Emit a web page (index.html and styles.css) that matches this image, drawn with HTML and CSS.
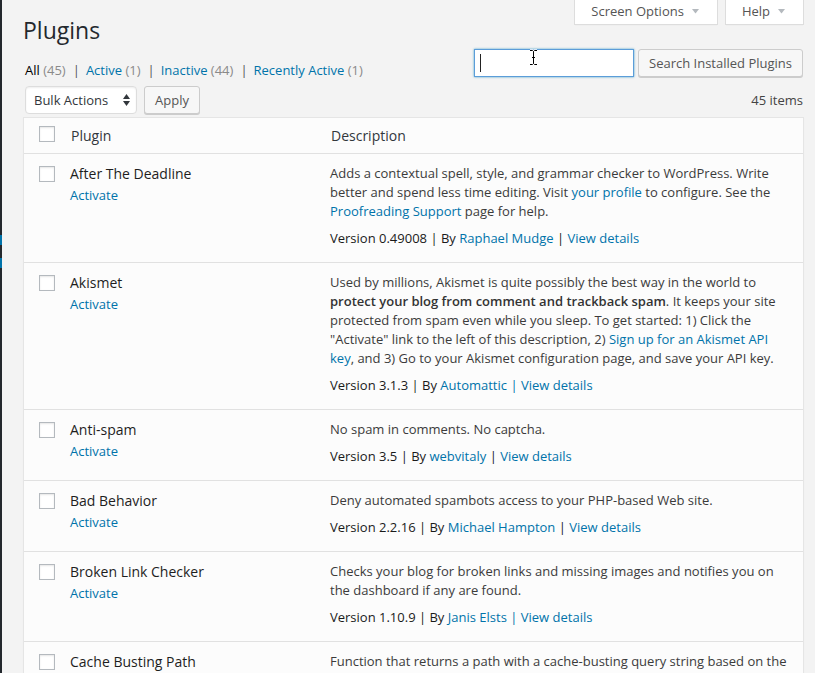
FILE: index.html
```html
<!DOCTYPE html>
<html lang="en">
<head>
<meta charset="utf-8">
<title>Plugins</title>
<link rel="stylesheet" href="styles.css">
</head>
<body>
<div class="page">
  <div class="edge"><span class="mark"></span><span class="mark"></span></div>
  <main class="wrap">
    <div class="top">
      <h1>Plugins</h1>
      <div class="meta-links">
        <button class="tab">Screen Options<svg class="tri" width="7" height="5" viewBox="0 0 7 5"><polygon points="0,0 7,0 3.5,4.5" fill="#b4b9be"/></svg></button>
        <button class="tab">Help<svg class="tri" width="7" height="5" viewBox="0 0 7 5"><polygon points="0,0 7,0 3.5,4.5" fill="#b4b9be"/></svg></button>
      </div>
    </div>
    <div class="filters">
      <ul class="subsubsub">
        <li><a class="current">All <span class="count">(45)</span></a><span class="sep">|</span></li>
        <li><a>Active <span class="count">(1)</span></a><span class="sep">|</span></li>
        <li><a>Inactive <span class="count">(44)</span></a><span class="sep">|</span></li>
        <li><a>Recently Active <span class="count">(1)</span></a></li>
      </ul>
      <div class="search-box">
        <span class="search-field">
          <input type="search" class="search-input" aria-label="Search Installed Plugins">
          <span class="caret"></span>
          <svg class="ibeam" width="9" height="17" viewBox="0 0 9 17"><path d="M1 1.5h2.5l1 1 1-1H8M4.5 2.5v12M1 15.5h2.5l1-1 1 1H8M3 8.5h3" fill="none" stroke="#fff" stroke-width="2.4"/><path d="M1 1.5h2.5l1 1 1-1H8M4.5 2.5v12M1 15.5h2.5l1-1 1 1H8M3 8.5h3" fill="none" stroke="#000" stroke-width="1"/></svg>
        </span>
        <button class="btn">Search Installed Plugins</button>
      </div>
    </div>
    <div class="tablenav">
      <div class="bulk">
        <div class="select">Bulk Actions<svg class="sort" width="7" height="12" viewBox="0 0 7 12"><polygon points="3.5,0 7,5 0,5" fill="#32373c"/><polygon points="0,7 7,7 3.5,12" fill="#32373c"/></svg></div>
        <button class="btn">Apply</button>
      </div>
      <div class="items">45 items</div>
    </div>
    <table class="plugins">
      <colgroup><col class="c-check"><col class="c-name"><col class="c-desc"></colgroup>
      <thead>
        <tr><th class="check"><input type="checkbox" class="cb" aria-label="Select all"></th><th>Plugin</th><th>Description</th></tr>
      </thead>
      <tbody>
        <tr>
          <td class="check"><input type="checkbox" class="cb" aria-label="Select"></td>
          <td><strong class="name">After The Deadline</strong><div class="actions"><a>Activate</a></div></td>
          <td><p>Adds a contextual spell, style, and grammar checker to WordPress. Write better and spend less time editing. Visit <a>your profile</a> to configure. See the <a>Proofreading Support</a> page for help.</p>
          <div class="ver">Version 0.49008 | By <a>Raphael Mudge</a> | <a>View details</a></div></td>
        </tr>
        <tr>
          <td class="check"><input type="checkbox" class="cb" aria-label="Select"></td>
          <td><strong class="name">Akismet</strong><div class="actions"><a>Activate</a></div></td>
          <td><p>Used by millions, Akismet is quite possibly the best way in the world to <b>protect your blog from comment and trackback spam</b>. It keeps your site protected from spam even while you sleep. To get started: 1) Click the "Activate" link to the left of this description, 2) <a>Sign up for an Akismet API key</a>, and 3) Go to your Akismet configuration page, and save your API key.</p>
          <div class="ver">Version 3.1.3 | By <a>Automattic</a> <a>| View details</a></div></td>
        </tr>
        <tr>
          <td class="check"><input type="checkbox" class="cb" aria-label="Select"></td>
          <td><strong class="name">Anti-spam</strong><div class="actions"><a>Activate</a></div></td>
          <td><p>No spam in comments. No captcha.</p>
          <div class="ver">Version 3.5 | By <a>webvitaly</a> | <a>View details</a></div></td>
        </tr>
        <tr>
          <td class="check"><input type="checkbox" class="cb" aria-label="Select"></td>
          <td><strong class="name">Bad Behavior</strong><div class="actions"><a>Activate</a></div></td>
          <td><p>Deny automated spambots access to your PHP-based Web site.</p>
          <div class="ver">Version 2.2.16 | By <a>Michael Hampton</a> | <a>View details</a></div></td>
        </tr>
        <tr>
          <td class="check"><input type="checkbox" class="cb" aria-label="Select"></td>
          <td><strong class="name">Broken Link Checker</strong><div class="actions"><a>Activate</a></div></td>
          <td><p>Checks your blog for broken links and missing images and notifies you on the dashboard if any are found.</p>
          <div class="ver">Version 1.10.9 | By <a>Janis Elsts</a> <a>| View details</a></div></td>
        </tr>
        <tr>
          <td class="check"><input type="checkbox" class="cb" aria-label="Select"></td>
          <td><strong class="name">Cache Busting Path</strong><div class="actions"><a>Activate</a></div></td>
          <td><p>Function that returns a path with a cache-busting query string based on the file's modification time.</p>
          <div class="ver">Version 1.0 | By <a>Author</a> | <a>View details</a></div></td>
        </tr>
      </tbody>
    </table>
  </main>
</div>
</body>
</html>
```
FILE: styles.css
```css
* { box-sizing: border-box; }
html, body { margin: 0; padding: 0; }
body {
  background: #f3f3f3;
  font-family: "Open Sans", "Liberation Sans", sans-serif;
  font-size: 13px;
  color: #444;
  line-height: 19px;
  overflow: hidden;
}
a { color: #0073aa; text-decoration: none; }

.page { display: flex; min-height: 673px; }
.edge {
  width: 2px; flex: none; background: #23282d;
  display: flex; flex-direction: column; gap: 13px; padding-top: 235px;
}
.edge .mark { display: block; height: 10px; background: #0073aa; }

.wrap { flex: 1; margin-left: 21px; margin-right: 11px; min-width: 0; }

.top { display: flex; justify-content: space-between; align-items: flex-start; }
h1 {
  margin: 16px 0 4px 0;
  font-size: 23px; font-weight: 400; line-height: 29px; color: #23282d;
}
.meta-links { display: flex; gap: 7px; margin-right: 0; }
.tab {
  font-family: inherit; font-size: 13px; color: #555;
  background: #fff; border: 1px solid #ddd; border-top: 0;
  height: 25px; line-height: 23px; padding: 0 18px 1px 16px; margin: 0;
  display: flex; align-items: center;
  box-shadow: 0 1px 1px -1px rgba(0,0,0,.1);
}
.tab .tri { margin-left: 8px; margin-top: -1px; }

.filters { display: flex; justify-content: space-between; align-items: flex-start; }
.subsubsub {
  list-style: none; margin: 8px 0 0 2px; padding: 0;
  display: flex; line-height: 26px; color: #666;
}
.subsubsub a.current { color: #000; }
.subsubsub .count { color: #8a8a8a; }
.subsubsub .sep { padding: 0 6px 0 7px; color: #555; }

.search-box { display: flex; gap: 4px; margin-right: 1px; }
.search-field { position: relative; display: block; }
.search-input {
  display: block; width: 160px; height: 28px; margin: 0;
  border: 1px solid #5b9dd9; border-radius: 0; background: #fff;
  box-shadow: 0 0 2px rgba(30,140,190,.8); outline: none;
  font-family: inherit; font-size: 13px;
}
.caret { position: absolute; left: 6px; top: 5px; width: 1px; height: 18px; background: #222; }
.ibeam { position: absolute; left: 55px; top: 0; }

.btn {
  font-family: inherit; font-size: 13px; color: #555;
  height: 28px; line-height: 26px; padding: 0 10px;
  background: #f7f7f7; border: 1px solid #ccc; border-radius: 3px;
  box-shadow: 0 1px 0 #ccc; margin: 0;
}

.tablenav {
  display: flex; justify-content: space-between; align-items: center;
  margin: 3px 1px 3px 0; height: 28px;
}
.bulk { display: flex; gap: 7px; margin-left: 2px; }
.select {
  width: 112px; height: 28px; line-height: 26px;
  border: 1px solid #ddd; border-radius: 4px; background: #fff;
  box-shadow: inset 0 1px 2px rgba(0,0,0,.07);
  padding: 0 0 0 8px; color: #32373c;
  display: flex; align-items: center; justify-content: space-between;
}
.select .sort { margin-right: 6px; }
.bulk .btn { width: 56px; padding: 0; }
.items { color: #444; }

table.plugins {
  width: 781px; table-layout: fixed; border-spacing: 0;
  border: 1px solid #e5e5e5; background: #fcfcfc;
  box-shadow: 0 1px 1px rgba(0,0,0,.04);
}
.c-check { width: 36px; }
.c-name { width: 260px; }
.plugins th {
  text-align: left; font-weight: 400; font-size: 14px; color: #32373c;
  padding: 8px 10px 8px 11px; line-height: 19px; border-bottom: 1px solid #e1e1e1;
  vertical-align: top;
}
.plugins th.check { padding: 8px 0 8px 15px; }
.cb {
  -webkit-appearance: none; appearance: none; display: block;
  width: 16px; height: 16px; margin: 0;
  border: 1px solid #b4b9be; background: #fff; border-radius: 0;
  box-shadow: inset 0 1px 2px rgba(0,0,0,.1);
}
.plugins td {
  padding: 10px 10px 14px; vertical-align: top; border-bottom: 1px solid #e1e1e1;
  color: #3b3b3b; line-height: 19px;
}
.plugins td.check { padding: 12px 0 0 15px; }
.name { display: block; font-size: 14px; font-weight: 400; color: #1e1e1e; line-height: 19px; }
.actions { padding-top: 3px; }
.plugins td p { margin: 0 0 8px; }
.plugins td b { font-weight: 600; color: #333; }
.ver { color: #1a1a1a; }
```
